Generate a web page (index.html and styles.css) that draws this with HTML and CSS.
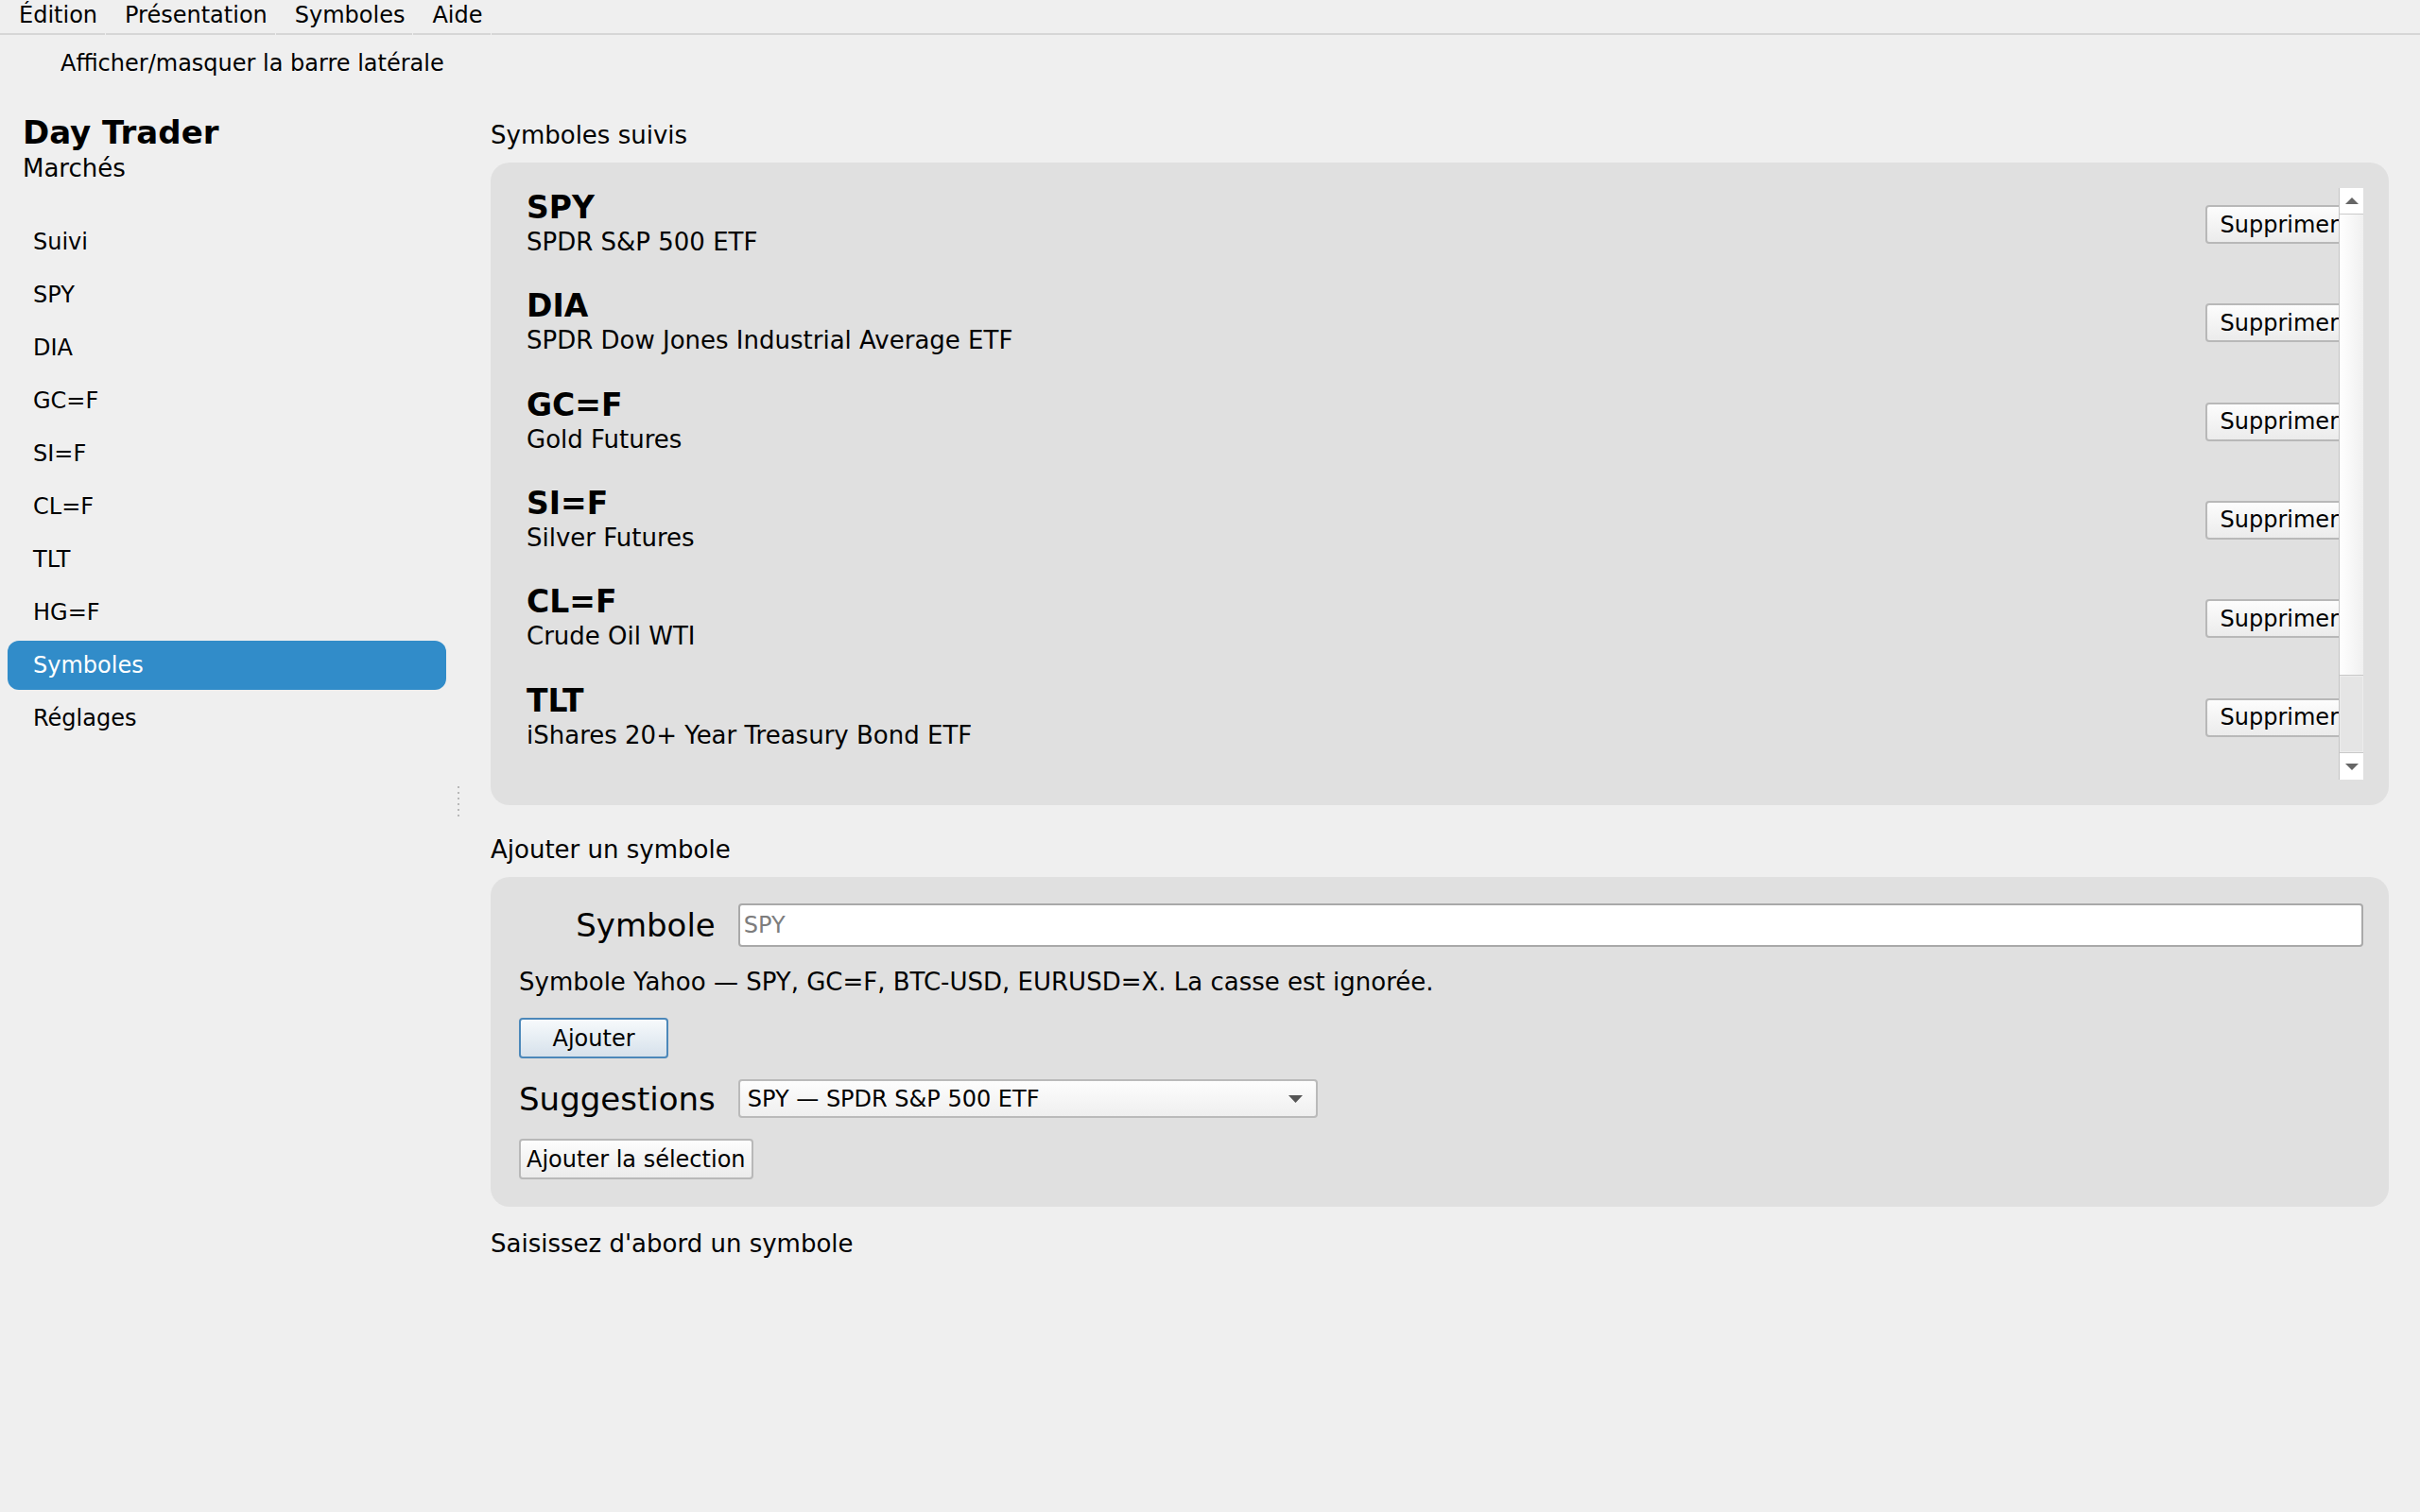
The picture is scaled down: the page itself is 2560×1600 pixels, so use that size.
FILE: index.html
```html
<!DOCTYPE html>
<html lang="fr">
<head>
<meta charset="utf-8">
<title>Day Trader</title>
<link rel="stylesheet" href="styles.css">
</head>
<body>
<nav class="menubar">
  <span class="menu-item">Édition</span>
  <span class="menu-item">Présentation</span>
  <span class="menu-item">Symboles</span>
  <span class="menu-item">Aide</span>
  <span class="menu-fill"></span>
</nav>
<div class="toolbar">
  <button class="toggle" type="button">Afficher/masquer la barre latérale</button>
</div>
<div class="main">
  <aside class="sidebar">
    <div class="brand">
      <div class="brand-title">Day Trader</div>
      <div class="brand-sub">Marchés</div>
    </div>
    <ul class="nav">
      <li class="nav-item">Suivi</li>
      <li class="nav-item">SPY</li>
      <li class="nav-item">DIA</li>
      <li class="nav-item">GC=F</li>
      <li class="nav-item">SI=F</li>
      <li class="nav-item">CL=F</li>
      <li class="nav-item">TLT</li>
      <li class="nav-item">HG=F</li>
      <li class="nav-item active">Symboles</li>
      <li class="nav-item">Réglages</li>
    </ul>
  </aside>
  <div class="splitter">
    <span class="grip"></span><span class="grip"></span><span class="grip"></span>
    <span class="grip"></span><span class="grip"></span><span class="grip"></span>
  </div>
  <main class="content">
    <h2 class="section-title">Symboles suivis</h2>
    <section class="card watch-card">
      <div class="watch-list">
        <div class="watch-track">
          <div class="watch-row">
            <div class="watch-info">
              <div class="ticker">SPY</div>
              <div class="ticker-name">SPDR S&amp;P 500 ETF</div>
            </div>
            <button class="btn" type="button">Supprimer</button>
          </div>
          <div class="watch-row">
            <div class="watch-info">
              <div class="ticker">DIA</div>
              <div class="ticker-name">SPDR Dow Jones Industrial Average ETF</div>
            </div>
            <button class="btn" type="button">Supprimer</button>
          </div>
          <div class="watch-row">
            <div class="watch-info">
              <div class="ticker">GC=F</div>
              <div class="ticker-name">Gold Futures</div>
            </div>
            <button class="btn" type="button">Supprimer</button>
          </div>
          <div class="watch-row">
            <div class="watch-info">
              <div class="ticker">SI=F</div>
              <div class="ticker-name">Silver Futures</div>
            </div>
            <button class="btn" type="button">Supprimer</button>
          </div>
          <div class="watch-row">
            <div class="watch-info">
              <div class="ticker">CL=F</div>
              <div class="ticker-name">Crude Oil WTI</div>
            </div>
            <button class="btn" type="button">Supprimer</button>
          </div>
          <div class="watch-row">
            <div class="watch-info">
              <div class="ticker">TLT</div>
              <div class="ticker-name">iShares 20+ Year Treasury Bond ETF</div>
            </div>
            <button class="btn" type="button">Supprimer</button>
          </div>
          <div class="watch-row">
            <div class="watch-info">
              <div class="ticker">HG=F</div>
              <div class="ticker-name">Copper Futures</div>
            </div>
            <button class="btn" type="button">Supprimer</button>
          </div>
        </div>
      </div>
      <div class="scrollbar">
        <div class="sb-arrow up">
          <svg width="14" height="7" viewBox="0 0 14 7"><path d="M0 7 L7 0 L14 7 Z" fill="#666"/></svg>
        </div>
        <div class="sb-thumb"></div>
        <div class="sb-trough"></div>
        <div class="sb-arrow down">
          <svg width="14" height="7" viewBox="0 0 14 7"><path d="M0 0 L14 0 L7 7 Z" fill="#666"/></svg>
        </div>
      </div>
    </section>

    <h2 class="section-title">Ajouter un symbole</h2>
    <section class="card form-card">
      <label class="field-label" for="symbol">Symbole</label>
      <input class="entry" id="symbol" type="text" placeholder="SPY">
      <p class="hint">Symbole Yahoo — SPY, GC=F, BTC-USD, EURUSD=X. La casse est ignorée.</p>
      <button class="btn btn-primary" type="button">Ajouter</button>
      <span class="field-label">Suggestions</span>
      <div class="combo">
        <span>SPY — SPDR S&amp;P 500 ETF</span>
        <svg width="15" height="8" viewBox="0 0 15 8"><path d="M0 0 L15 0 L7.5 8 Z" fill="#555"/></svg>
      </div>
      <button class="btn btn-sel" type="button">Ajouter la sélection</button>
    </section>

    <p class="status">Saisissez d'abord un symbole</p>
  </main>
</div>
</body>
</html>
```

FILE: styles.css
```css
html, body {
  margin: 0;
  height: 100%;
}

body {
  background: #efefef;
  color: #000;
  font-family: "DejaVu Sans", "Noto Sans", sans-serif;
  display: flex;
  flex-direction: column;
  overflow: hidden;
}

/* ---- menu bar ---- */
.menubar {
  display: flex;
  flex: none;
}

.menu-item {
  font-size: 24px;
  line-height: 32px;
  padding: 0 8px 3px 20px;
  margin-right: 1px;
  border-bottom: 2px solid #d6d6d6;
}

.menu-fill {
  flex: 1;
  border-bottom: 2px solid #d6d6d6;
}

/* ---- toolbar ---- */
.toolbar {
  flex: none;
  padding: 14px 0 12px 64px;
}

.toggle {
  font-family: inherit;
  font-size: 24px;
  line-height: 32px;
  background: none;
  border: 0;
  padding: 0;
  color: #000;
}

/* ---- main area ---- */
.main {
  flex: 1;
  min-height: 0;
  display: flex;
}

.sidebar {
  width: 480px;
  flex: none;
  padding-top: 25px;
}

.brand {
  padding-left: 24px;
}

.brand-title {
  font-size: 34px;
  font-weight: bold;
  line-height: 40px;
}

.brand-sub {
  font-size: 26px;
  line-height: 32px;
  margin-top: 2px;
}

.nav {
  list-style: none;
  margin: 36px 0 0;
  padding: 0 8px;
  display: flex;
  flex-direction: column;
  gap: 4px;
}

.nav-item {
  height: 52px;
  padding-left: 27px;
  font-size: 24px;
  line-height: 52px;
  border-radius: 12px;
}

.nav-item.active {
  background: #318cc9;
  color: #fff;
}

.splitter {
  width: 10px;
  flex: none;
  display: flex;
  flex-direction: column;
  justify-content: center;
  align-items: center;
  gap: 4px;
}

.grip {
  width: 2px;
  height: 2px;
  background: #b8b8b8;
}

.content {
  flex: 1;
  min-width: 0;
  padding: 32px 33px 0 29px;
}

.section-title {
  font-size: 26px;
  font-weight: normal;
  line-height: 32px;
  margin: 0 0 13px;
}

.card {
  background: #e0e0e0;
  border-radius: 20px;
}

/* ---- watched symbols ---- */
.watch-card {
  display: flex;
  height: 680px;
  box-sizing: border-box;
  padding: 27px;
  margin-bottom: 31px;
}

.watch-list {
  flex: 1;
  min-width: 0;
  overflow: hidden;
}

.watch-track {
  width: calc(100% + 16px);
  display: grid;
  grid-auto-rows: 104.33px;
}

.watch-row {
  display: flex;
  justify-content: space-between;
  align-items: flex-start;
  padding: 1px 0 0 11px;
}

.ticker {
  font-size: 33px;
  font-weight: bold;
  line-height: 40px;
}

.ticker-name {
  font-size: 26px;
  line-height: 32px;
}

.btn {
  font-family: inherit;
  font-size: 24px;
  color: #000;
  height: 41px;
  padding: 0 14px;
  border: 2px solid #b8b8b8;
  border-radius: 4px;
  background: linear-gradient(#fdfdfd, #ebebeb);
}

.watch-row .btn {
  margin-top: 17px;
}

.scrollbar {
  width: 26px;
  flex: none;
  display: flex;
  flex-direction: column;
  box-sizing: border-box;
  border-left: 1px solid #c4c4c4;
  background: linear-gradient(to right, #ffffff, #f0f0f0);
}

.sb-arrow {
  height: 28px;
  flex: none;
  display: flex;
  align-items: center;
  justify-content: center;
  background: #fff;
  box-sizing: border-box;
}

.sb-arrow.up {
  border-bottom: 1px solid #cacaca;
}

.sb-thumb {
  flex: 6;
}

.sb-trough {
  flex: 1;
  background: #e5e5e5;
  border-top: 1px solid #c8c8c8;
  border-bottom: 1px solid #c8c8c8;
  box-shadow: inset 0 0 0 1px #ececec;
}

/* ---- add form ---- */
.form-card {
  display: grid;
  grid-template-columns: max-content 1fr;
  column-gap: 24px;
  row-gap: 22px;
  align-items: center;
  padding: 28px 27px 29px 30px;
}

.field-label {
  font-size: 34px;
  line-height: 40px;
  text-align: right;
}

.entry {
  height: 46px;
  box-sizing: border-box;
  border: 2px solid #a9a9a9;
  border-radius: 4px;
  background: #fff;
  font-family: inherit;
  font-size: 24px;
  padding: 0 4px;
  outline: none;
  min-width: 0;
}

.entry::placeholder {
  color: #7d7d7d;
}

.hint {
  grid-column: 1 / -1;
  margin: -1px 0 0;
  font-size: 26px;
  line-height: 32px;
}

.btn-primary {
  grid-column: 1 / -1;
  justify-self: start;
  width: 158px;
  height: 43px;
  border-color: #4c88ba;
  background: linear-gradient(#f7fafc, #d6e1eb);
}

.combo {
  width: 613px;
  height: 41px;
  box-sizing: border-box;
  display: flex;
  align-items: center;
  justify-content: space-between;
  padding: 0 14px 0 8px;
  border: 2px solid #bababa;
  border-radius: 4px;
  background: linear-gradient(#fdfdfd, #efefef);
  font-size: 24px;
}

.btn-sel {
  grid-column: 1 / -1;
  justify-self: start;
  height: 43px;
  padding: 0 6px;
}

.status {
  margin: 23px 0 0;
  font-size: 26px;
  line-height: 32px;
}
```
